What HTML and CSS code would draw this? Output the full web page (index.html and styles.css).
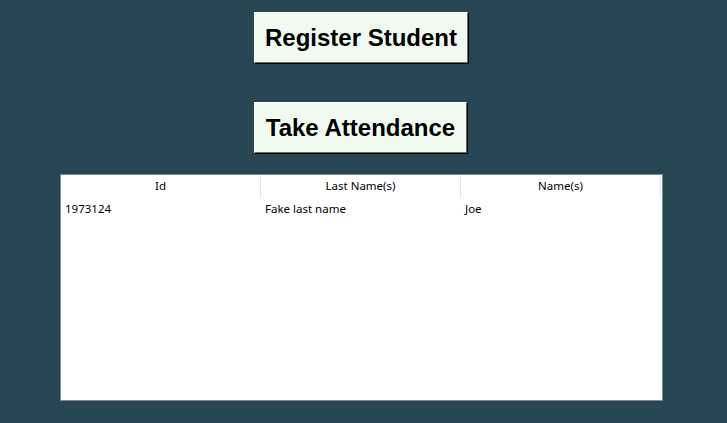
FILE: index.html
```html
<!DOCTYPE html>
<html>
<head>
<meta charset="utf-8">
<link rel="stylesheet" href="styles.css">
</head>
<body>
<main class="page">
  <button class="big-btn btn-register">Register Student</button>
  <button class="big-btn btn-attend">Take Attendance</button>
  <section class="grid">
    <div class="grid-head">
      <div class="hcell">Id</div>
      <div class="hcell">Last Name(s)</div>
      <div class="hcell">Name(s)</div>
    </div>
    <div class="grid-row">
      <div class="cell">1973124</div>
      <div class="cell">Fake last name</div>
      <div class="cell">Joe</div>
    </div>
  </section>
</main>
</body>
</html>
```

FILE: styles.css
```css
html, body {
  margin: 0;
  padding: 0;
  background: #264653;
  height: 100%;
}
.page {
  width: 727px;
  height: 423px;
  display: flex;
  flex-direction: column;
  align-items: center;
  padding-top: 12px;
  box-sizing: border-box;
}
.big-btn {
  font-family: "Liberation Sans", Arial, sans-serif;
  font-weight: bold;
  font-size: 24px;
  line-height: 27px;
  color: #000;
  background: #f0faef;
  border-style: solid;
  border-width: 1px;
  border-color: #ffffff #6a6a6a #6a6a6a #ffffff;
  box-shadow: 1px 1px 0 #000;
  padding: 11px;
  margin: 0 0 0 -6px;
  cursor: default;
}
.btn-register {
  padding-left: 10px;
  padding-right: 10px;
  margin-left: -5px;
}
.btn-attend {
  margin-top: 39px;
}
.grid {
  margin-top: 21px;
  margin-left: -4px;
  width: 603px;
  height: 227px;
  box-sizing: border-box;
  background: #ffffff;
  border: 1px solid #828790;
  font-family: "Noto Sans", "Segoe UI", sans-serif;
  font-size: 11.5px;
  color: #000;
}
.grid-head {
  display: grid;
  grid-template-columns: 200px 200px 200px;
  height: 24px;
}
.hcell {
  text-align: center;
  line-height: 22px;
  border-right: 1px solid #e5e5e5;
  height: 23px;
}
.grid-row {
  display: grid;
  grid-template-columns: 200px 200px 200px;
  height: 20px;
}
.cell {
  padding-left: 4px;
  line-height: 20px;
}
```
